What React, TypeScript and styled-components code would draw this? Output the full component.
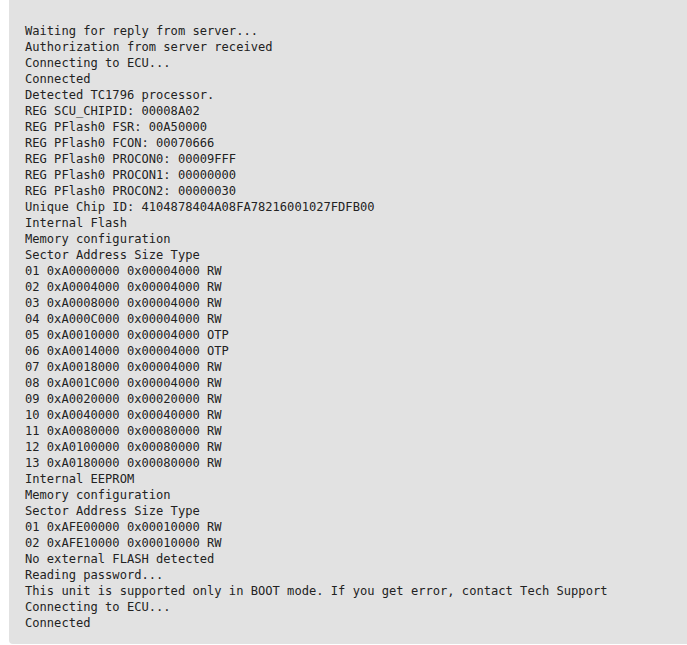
import React from "react";
import styled, { createGlobalStyle } from "styled-components";

const Global = createGlobalStyle`
  html, body { margin: 0; padding: 0; background: #ffffff; overflow: hidden; }
  #root { width: 687px; height: 645px; overflow: hidden; }
`;

const Page = styled.div`
  padding-left: 9px;
  width: 687px;
  box-sizing: border-box;
`;

const Console = styled.pre`
  margin: 0;
  width: 700px;
  box-sizing: border-box;
  background: #e2e2e2;
  border-radius: 0 0 4px 4px;
  padding: 23px 16px 13px 16px;
  font-family: "DejaVu Sans Mono", "Liberation Mono", monospace;
  font-size: 12.1px;
  line-height: 16px;
  color: #222222;
  white-space: pre;
`;

const lines = [
  "Waiting for reply from server...",
  "Authorization from server received",
  "Connecting to ECU...",
  "Connected",
  "Detected TC1796 processor.",
  "REG SCU_CHIPID: 00008A02",
  "REG PFlash0 FSR: 00A50000",
  "REG PFlash0 FCON: 00070666",
  "REG PFlash0 PROCON0: 00009FFF",
  "REG PFlash0 PROCON1: 00000000",
  "REG PFlash0 PROCON2: 00000030",
  "Unique Chip ID: 4104878404A08FA78216001027FDFB00",
  "Internal Flash",
  "Memory configuration",
  "Sector Address Size Type",
  "01 0xA0000000 0x00004000 RW",
  "02 0xA0004000 0x00004000 RW",
  "03 0xA0008000 0x00004000 RW",
  "04 0xA000C000 0x00004000 RW",
  "05 0xA0010000 0x00004000 OTP",
  "06 0xA0014000 0x00004000 OTP",
  "07 0xA0018000 0x00004000 RW",
  "08 0xA001C000 0x00004000 RW",
  "09 0xA0020000 0x00020000 RW",
  "10 0xA0040000 0x00040000 RW",
  "11 0xA0080000 0x00080000 RW",
  "12 0xA0100000 0x00080000 RW",
  "13 0xA0180000 0x00080000 RW",
  "Internal EEPROM",
  "Memory configuration",
  "Sector Address Size Type",
  "01 0xAFE00000 0x00010000 RW",
  "02 0xAFE10000 0x00010000 RW",
  "No external FLASH detected",
  "Reading password...",
  "This unit is supported only in BOOT mode. If you get error, contact Tech Support",
  "Connecting to ECU...",
  "Connected",
];

export default function App() {
  return (
    <>
      <Global />
      <Page>
        <Console>{lines.join("\n")}</Console>
      </Page>
    </>
  );
}
